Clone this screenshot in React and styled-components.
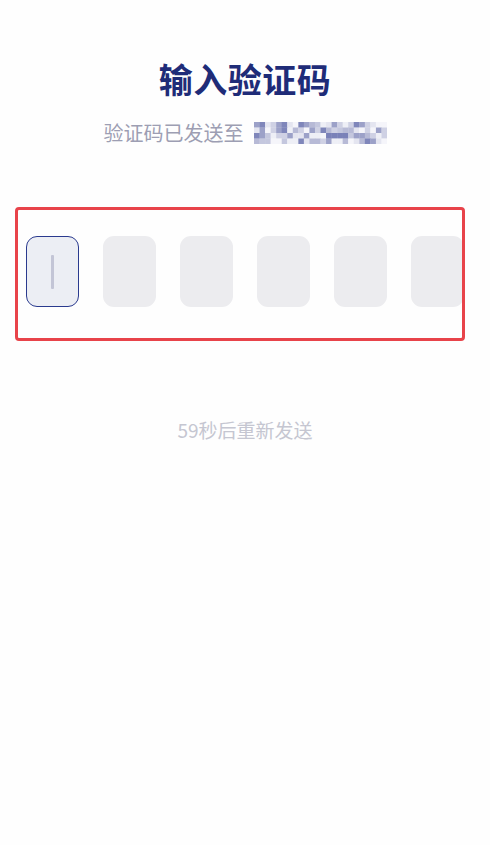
import React from "react";
import styled, { createGlobalStyle } from "styled-components";

const GlobalStyle = createGlobalStyle`
  html, body {
    margin: 0;
    padding: 0;
    background: #fefefe;
  }
  * {
    box-sizing: border-box;
  }
`;

const Page = styled.div`
  min-height: 100vh;
  background: #fefefe;
  font-family: "Noto Sans CJK SC", "Noto Sans", sans-serif;
  display: flex;
  flex-direction: column;
  align-items: center;
  padding-top: 57px;
`;

const Title = styled.h1`
  margin: 0;
  font-size: 34px;
  line-height: 44px;
  font-weight: 700;
  color: #1f2c78;
  letter-spacing: 0.5px;
`;

const Subtitle = styled.div`
  margin-top: 18px;
  display: flex;
  align-items: center;
  gap: 10px;
  font-size: 20px;
  line-height: 28px;
  color: #9d9eb3;
`;

const Highlight = styled.div`
  margin-top: 60px;
  align-self: stretch;
  margin-left: 15px;
  margin-right: 25px;
  height: 134px;
  border: 3px solid #e8434a;
  border-radius: 4px;
  overflow: hidden;
  display: flex;
  align-items: flex-start;
  padding: 26px 0 0 8px;
`;

const Cells = styled.div`
  display: flex;
  gap: 24px;
  flex-shrink: 0;
`;

const Cell = styled.div`
  width: 53px;
  height: 71px;
  flex-shrink: 0;
  border-radius: 11px;
  background: ${(p) => (p.$active ? "#eceef4" : "#ececef")};
  border: ${(p) => (p.$active ? "1.5px solid #2a3a8e" : "none")};
  display: flex;
  align-items: center;
  justify-content: center;
`;

const Caret = styled.span`
  width: 3px;
  height: 34px;
  border-radius: 1px;
  background: #c3c5d6;
`;

const Countdown = styled.div`
  margin-top: 75px;
  font-size: 19px;
  line-height: 28px;
  color: #c5c6d1;
`;

const palette = ["#e4e5f0", "#cfd1e4", "#b7bad6", "#9ca1c8", "#7f86ba", "#eeeff6", "#c4c7de", "#f5f5fa"];

const Mosaic = () => {
  const cols = 24;
  const rows = 4;
  const w = 133 / cols;
  const h = 22 / rows;
  let seed = 7;
  const rand = () => {
    seed = (seed * 9301 + 49297) % 233280;
    return seed / 233280;
  };
  const rects = [];
  for (let r = 0; r < rows; r++) {
    for (let c = 0; c < cols; c++) {
      const v = rand();
      let col = palette[Math.floor(v * palette.length)];
      if (r === 2 && c > 12 && c < 17) col = "#7a81b8";
      rects.push(
        <rect key={`${r}-${c}`} x={c * w} y={r * h} width={w + 0.3} height={h + 0.3} fill={col} />
      );
    }
  }
  return (
    <svg width="133" height="22" viewBox="0 0 133 22" style={{ display: "block" }}>
      {rects}
    </svg>
  );
};

export default function App() {
  const cells = [0, 1, 2, 3, 4, 5];
  return (
    <Page>
      <GlobalStyle />
      <Title>输入验证码</Title>
      <Subtitle>
        <span>验证码已发送至</span>
        <Mosaic />
      </Subtitle>
      <Highlight>
        <Cells>
          {cells.map((i) => (
            <Cell key={i} $active={i === 0}>
              {i === 0 && <Caret />}
            </Cell>
          ))}
        </Cells>
      </Highlight>
      <Countdown>59秒后重新发送</Countdown>
    </Page>
  );
}
